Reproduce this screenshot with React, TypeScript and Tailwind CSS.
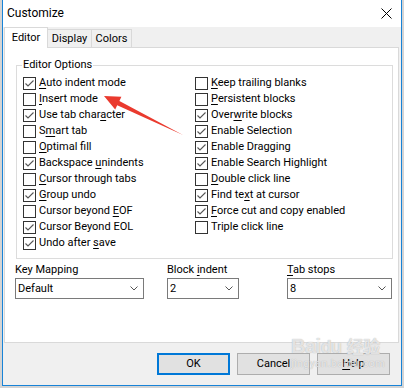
const font = "font-['Roboto',sans-serif]";

type Opt = { label: React.ReactNode; checked: boolean };

const U = ({ children }: { children: React.ReactNode }) => (
  <span className="underline underline-offset-[2px] decoration-[1px]">{children}</span>
);

const leftOptions: Opt[] = [
  { label: <><U>A</U>uto indent mode</>, checked: true },
  { label: <><U>I</U>nsert mode</>, checked: false },
  { label: <>Use tab char<U>a</U>cter</>, checked: true },
  { label: <>S<U>m</U>art tab</>, checked: false },
  { label: <><U>O</U>ptimal fill</>, checked: false },
  { label: <>Backspace <U>u</U>nindents</>, checked: true },
  { label: <><U>C</U>ursor through tabs</>, checked: false },
  { label: <><U>G</U>roup undo</>, checked: true },
  { label: <>Cursor beyond <U>E</U>OF</>, checked: false },
  { label: <>Cursor Beyond EOL</>, checked: true },
  { label: <>Undo after <U>s</U>ave</>, checked: true },
];

const rightOptions: Opt[] = [
  { label: <><U>K</U>eep trailing blanks</>, checked: false },
  { label: <><U>P</U>ersistent blocks</>, checked: false },
  { label: <>Over<U>w</U>rite blocks</>, checked: true },
  { label: <>Enable Selection</>, checked: true },
  { label: <>Enable Dragging</>, checked: true },
  { label: <>Enable Search Highlight</>, checked: true },
  { label: <><U>D</U>ouble click line</>, checked: false },
  { label: <>Find te<U>x</U>t at cursor</>, checked: true },
  { label: <><U>F</U>orce cut and copy enabled</>, checked: true },
  { label: <>Triple click line</>, checked: false },
];

const CheckRow = ({ label, checked }: Opt) => (
  <div className="flex items-center h-[16px] gap-[3px]">
    <span className="w-[13px] h-[13px] border border-[#333] bg-white flex items-center justify-center shrink-0">
      {checked && (
        <svg width="11" height="11" viewBox="0 0 11 11">
          <path d="M1.5 5.5 L4 8 L9.5 2.5" fill="none" stroke="#555" strokeWidth="1.1" />
        </svg>
      )}
    </span>
    <span className="whitespace-nowrap leading-[16px]">{label}</span>
  </div>
);

const Combo = ({ label, value, width }: { label: React.ReactNode; value: string; width: string }) => (
  <div className={`flex flex-col ${width}`}>
    <div className="h-[16px] leading-[16px] whitespace-nowrap">{label}</div>
    <div className="h-[21px] border border-[#7a7a7a] bg-white flex items-center justify-between pl-[2px] pr-[5px]">
      <span className="leading-[16px]">{value}</span>
      <svg width="8" height="5" viewBox="0 0 8 5">
        <path d="M0.5 0.5 L4 4 L7.5 0.5" fill="none" stroke="#555" strokeWidth="1" />
      </svg>
    </div>
  </div>
);

const Button = ({ children, primary }: { children: React.ReactNode; primary?: boolean }) => (
  <div
    className={`w-[73px] h-[22px] flex items-center justify-center bg-[#e1e1e1] ${
      primary ? "border-2 border-[#0078d7]" : "border border-[#adadad]"
    }`}
  >
    {children}
  </div>
);

export default function App() {
  return (
    <div className={`w-[404px] h-[388px] bg-[#d4d4d4] pl-[2px] text-[11px] text-black ${font}`}>
      <div className="relative w-[400px] h-[386px] border-x border-b border-[#1883d7] bg-[#f0f0f0] flex flex-col">
        {/* title bar */}
        <div className="h-[27px] bg-white flex items-center justify-between pl-[4px] pr-[9px]">
          <span className="leading-[16px] -mt-[1px] text-[12px]">Customize</span>
          <svg width="11" height="11" viewBox="0 0 11 11">
            <path d="M0.5 0.5 L10.5 10.5 M10.5 0.5 L0.5 10.5" stroke="#000" strokeWidth="1" />
          </svg>
        </div>

        {/* tabs */}
        <div className="h-[20px] flex items-end pl-[1px]">
          <div className="relative z-10 h-[21px] -mb-[1px] w-[44px] bg-white border-x border-t border-[#d9d9d9] flex justify-center pt-[2px] leading-[16px]">
            Editor
          </div>
          <div className="h-[18px] w-[44px] border-t border-r border-[#d9d9d9] flex justify-center items-center leading-[16px]">
            Display
          </div>
          <div className="h-[18px] w-[40px] border-t border-r border-[#d9d9d9] flex justify-center items-center leading-[16px]">
            Colors
          </div>
        </div>

        {/* panel */}
        <div className="ml-[1px] w-[395px] h-[296px] bg-white border border-[#d9d9d9] pl-[11px] pt-[17px]">
          <div className="relative w-[377px] border border-[#dcdcdc] pt-[9px] pb-[7px] pl-[6px]">
            <span className="absolute -top-[9px] left-[5px] bg-white px-[1px] leading-[16px]">Editor Options</span>
            <div className="grid grid-cols-[172px_1fr]">
              <div className="flex flex-col">
                {leftOptions.map((o, i) => (
                  <CheckRow key={i} {...o} />
                ))}
              </div>
              <div className="flex flex-col">
                {rightOptions.map((o, i) => (
                  <CheckRow key={i} {...o} />
                ))}
              </div>
            </div>
          </div>

          <div className="flex mt-[3px] -ml-[1px]">
            <Combo label="Key Mapping" value="Default" width="w-[129px]" />
            <div className="w-[23px]" />
            <Combo label={<>Block <U>i</U>ndent</>} value="2" width="w-[72px]" />
            <div className="w-[48px]" />
            <Combo label={<><U>T</U>ab stops</>} value="8" width="w-[105px]" />
          </div>
        </div>

        {/* buttons */}
        <div className="flex justify-end gap-[7px] pr-[11px] pt-[10px]">
          <Button primary>OK</Button>
          <Button>Cancel</Button>
          <Button>
            <U>H</U>elp
          </Button>
        </div>

        {/* red arrow annotation */}
        <svg className="absolute left-0 top-0 pointer-events-none" width="400" height="386" viewBox="2 0 400 386">
          <polygon
            points="103,96 120.4,96.8 118.4,100.9 182,135 116.2,105.3 114.2,109.4"
            fill="#ea3a2e"
          />
        </svg>

        {/* watermark */}
        <div className="absolute left-[288px] top-[336px] pointer-events-none text-white/70 [text-shadow:0_0_1px_#a0a0a0] leading-none">
          <div className="text-[20px] font-bold font-['Liberation_Sans',sans-serif] tracking-tight">
            Bai<span className="text-[18px]">du</span>{" "}
            <span className="font-['Noto_Sans_CJK_SC',sans-serif] text-[17px]">经验</span>
          </div>
          <div className="text-[11px] mt-[2px] tracking-wide">jingyan.baidu.com</div>
        </div>
      </div>
    </div>
  );
}
